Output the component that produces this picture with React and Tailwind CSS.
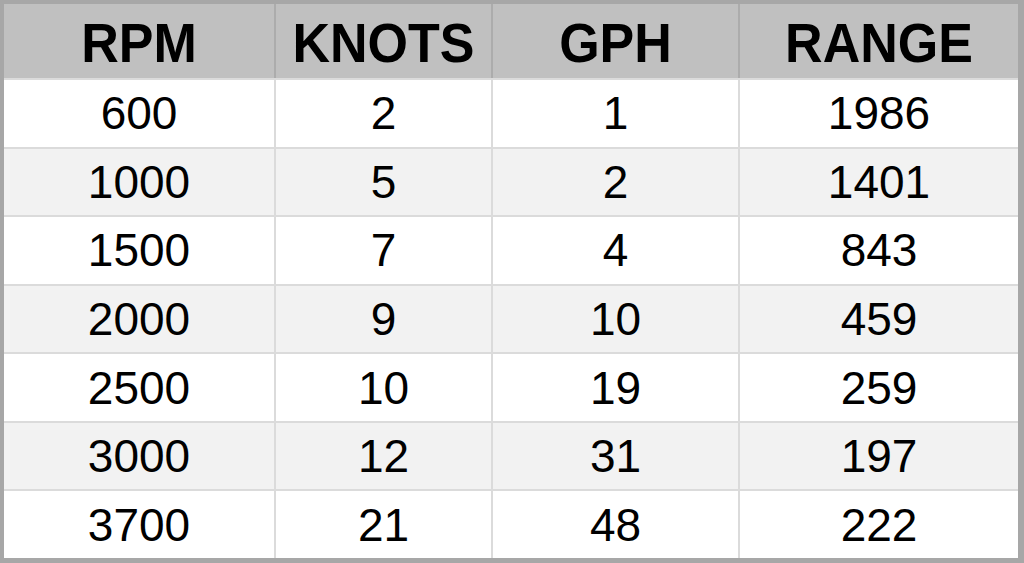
const headers = ["RPM", "KNOTS", "GPH", "RANGE"];

const rows = [
  ["600", "2", "1", "1986"],
  ["1000", "5", "2", "1401"],
  ["1500", "7", "4", "843"],
  ["2000", "9", "10", "459"],
  ["2500", "10", "19", "259"],
  ["3000", "12", "31", "197"],
  ["3700", "21", "48", "222"],
];

const cols = "grid grid-cols-[270px_215px_245px_278px] gap-x-[2px]";

export default function App() {
  return (
    <div
      className="w-[1024px] h-[563px] bg-[#a7a7a7] pl-[4px] pt-[4px] pr-[6px] pb-[5px] flex flex-col text-black"
      style={{ fontFamily: '"Liberation Sans", Arial, sans-serif' }}
    >
      {/* header */}
      <div className={`${cols} h-[74px] bg-[#acacac]`}>
        {headers.map((h) => (
          <div
            key={h}
            className="bg-[#c0c0c0] flex items-center justify-center pt-[3px] text-[52px] font-bold leading-none"
          >
            <span className="inline-block scale-y-[1.06]">{h}</span>
          </div>
        ))}
      </div>

      {/* body */}
      <div className="flex-1 flex flex-col gap-y-[2px] pt-[2px] bg-[#dbdbdb]">
        {rows.map((r, i) => (
          <div key={i} className={`${cols} flex-1`}>
            {r.map((v, j) => (
              <div
                key={j}
                className={`flex items-center justify-center text-[46px] leading-none ${
                  i % 2 === 0 ? "bg-white" : "bg-[#f2f2f2]"
                }`}
              >
                {v}
              </div>
            ))}
          </div>
        ))}
      </div>
    </div>
  );
}
